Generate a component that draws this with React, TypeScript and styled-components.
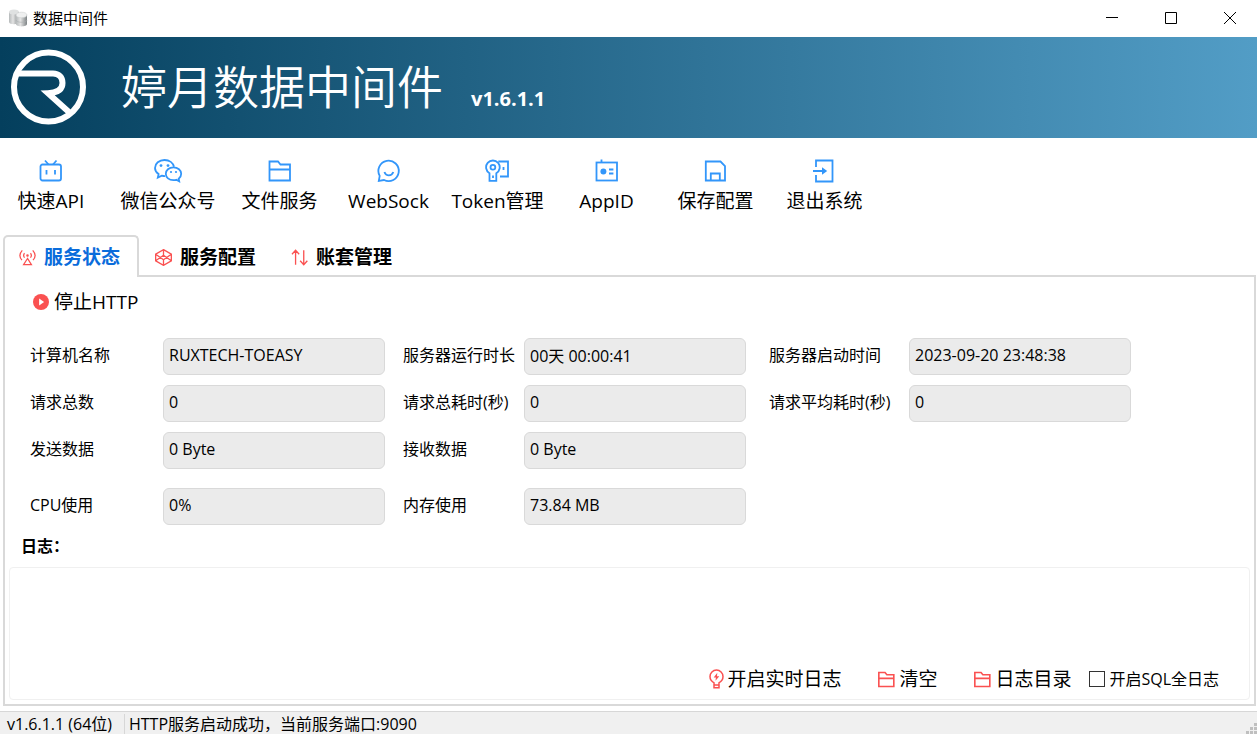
import React from "react";
import styled, { createGlobalStyle, css } from "styled-components";

const GlobalStyle = createGlobalStyle`
  * { box-sizing: border-box; }
  body {
    margin: 0;
    background: #fff;
    color: #000;
    font-family: "Open Sans", "Noto Sans CJK SC", sans-serif;
    font-size: 16px;
    line-height: 24px;
  }
  button, input, textarea { font: inherit; color: inherit; }
`;

const Window = styled.div`
  display: flex;
  flex-direction: column;
  min-height: 100vh;
`;

const TitleBar = styled.header`
  display: flex;
  align-items: center;
  height: 37px;
  padding: 0 0 2px 8px;
  gap: 5px;
`;

const WindowTitle = styled.span`
  flex: 1;
  font-size: 15px;
`;

const WindowControls = styled.div`
  display: flex;
  gap: 5px;
`;

const ControlButton = styled.button`
  display: flex;
  align-items: center;
  justify-content: center;
  width: 54px;
  height: 34px;
  padding: 0;
  border: 0;
  background: none;
`;

const Banner = styled.div`
  display: flex;
  align-items: center;
  height: 101px;
  padding: 0 0 2px 9px;
  color: #fff;
  background: linear-gradient(90deg, #043f5d, #529dc6);
`;

const BannerTitle = styled.h1`
  margin: 0 0 2px 32px;
  font-size: 46px;
  line-height: 60px;
  font-weight: 350;
`;

const BannerVersion = styled.span`
  margin: 24px 0 0 28px;
  font-size: 20px;
  font-weight: 700;
`;

const Toolbar = styled.nav`
  display: flex;
  height: 97px;
  padding-top: 20px;
`;

const ToolButton = styled.button<{ $width: number; $gapAfter?: number }>`
  display: flex;
  flex-direction: column;
  align-items: center;
  gap: 3px;
  width: ${(p) => p.$width}px;
  margin-right: ${(p) => p.$gapAfter ?? 0}px;
  padding: 0;
  border: 0;
  background: none;
  font-size: 19px;
  line-height: 28px;
  white-space: nowrap;
  svg { color: #3296fa; }
`;

const TabList = styled.div`
  position: relative;
  z-index: 1;
  display: flex;
  margin: 0 0 -2px 3px;
`;

const Tab = styled.button<{ $active?: boolean }>`
  display: flex;
  align-items: center;
  gap: 8px;
  width: 136px;
  height: 42px;
  padding: 0 0 0 14px;
  border: 2px solid transparent;
  border-bottom: 0;
  border-radius: 5px 5px 0 0;
  background: none;
  font-size: 19px;
  line-height: 28px;
  font-weight: 700;
  white-space: nowrap;
  svg { color: #fa5151; }
  ${(p) =>
    p.$active &&
    css`
      border-color: #d9d9d9;
      background: #fff;
      color: #0a6cdb;
    `}
`;

const Panel = styled.main`
  flex: 1;
  display: flex;
  flex-direction: column;
  margin: 0 1px 5px 3px;
  border: 2px solid #d9d9d9;
  padding: 11px 4px 4px 4px;
`;

const ActionButton = styled.button`
  display: flex;
  align-items: center;
  padding: 0;
  border: 0;
  background: none;
  font-size: 19px;
  line-height: 28px;
  white-space: nowrap;
  svg { color: #fa5151; }
`;

const StopButton = styled(ActionButton)`
  align-self: flex-start;
  gap: 5px;
  margin-left: 24px;
`;

const StatusGrid = styled.div`
  display: grid;
  grid-template-columns: 373px 366px 1fr;
  row-gap: 10px;
  margin: 22px 0 0 21px;
`;

const Field = styled.div<{ $column: number; $labelWidth: number; $spaced?: boolean }>`
  grid-column: ${(p) => p.$column};
  display: grid;
  grid-template-columns: ${(p) => p.$labelWidth}px 222px;
  margin-top: ${(p) => (p.$spaced ? 9 : 0)}px;
`;

const FieldLabel = styled.label`
  padding-top: 5px;
  white-space: nowrap;
`;

const FieldInput = styled.input`
  width: 222px;
  height: 37px;
  padding: 0 5px 3px;
  border: 1px solid #d9d9d9;
  border-radius: 6px;
  background: #ebebeb;
  outline: none;
`;

const LogLabel = styled.label`
  margin: 9px 0 9px 12px;
  font-weight: 700;
`;

const LogBox = styled.section`
  flex: 1;
  display: flex;
  flex-direction: column;
  border: 1px solid #f0f0f0;
  border-radius: 4px;
  padding: 5px;
`;

const LogText = styled.textarea`
  flex: 1;
  width: 100%;
  min-height: 81px;
  padding: 0;
  border: 0;
  resize: none;
  outline: none;
  background: none;
`;

const LogActions = styled.div`
  display: flex;
  justify-content: flex-end;
  align-items: center;
  height: 40px;
  padding: 10px 25px 0 0;
`;

const LogButton = styled(ActionButton)<{ $gapAfter: number }>`
  gap: 3px;
  margin-right: ${(p) => p.$gapAfter}px;
`;

const CheckLabel = styled.label`
  display: flex;
  align-items: center;
  gap: 4px;
  white-space: nowrap;
`;

const CheckBox = styled.input`
  appearance: none;
  width: 16px;
  height: 16px;
  margin: 0;
  border: 1px solid #333;
  background: #fff;
  &:checked { background: #0a6cdb; }
`;

const StatusBar = styled.footer`
  display: flex;
  height: 23px;
  padding-left: 7px;
  border-top: 1px solid #d7d7d7;
  background: #f0f0f0;
  line-height: 20px;
`;

const StatusCell = styled.span<{ $width?: number }>`
  ${(p) =>
    p.$width
      ? css`
          width: ${p.$width}px;
          border-right: 1px solid #d7d7d7;
        `
      : css`
          flex: 1;
          padding-left: 4px;
        `}
  margin-top: 2px;
  white-space: nowrap;
`;

const Grip = styled.svg`
  align-self: flex-end;
`;

type IconProps = { size?: number; children: React.ReactNode };

const Icon = ({ size = 26, children }: IconProps) => (
  <svg
    width={size}
    height={size}
    viewBox="0 0 26 26"
    fill="none"
    stroke="currentColor"
    strokeWidth={size < 20 ? 2.2 : 1.8}
    aria-hidden="true"
  >
    {children}
  </svg>
);

const TvIcon = () => (
  <Icon>
    <rect x="2.500" y="6.500" width="20.500" height="16" rx="2" />
    <path d="M7 2.500l3.500 4M18.500 2.500l-3.500 4M8.500 12v4.500M17 12v4.500" />
  </Icon>
);

const WechatIcon = () => (
  <svg width="30" height="26" viewBox="0 0 30 26" fill="none" stroke="currentColor" strokeWidth="1.8" aria-hidden="true">
    <path d="M12 18.200c-1.200 0-2.300-.2-3.300-.5L4.800 19.600l.8-3.500C3.200 14.500 2 12.300 2 10 2 5.500 6.200 2 11.500 2c4.800 0 8.700 2.800 9.500 6.800" />
    <path d="M20.400 9.400c-4.400 0-7.600 2.800-7.600 6.400s3.200 6.400 7.600 6.400c1 0 2-.1 2.900-.4l2.900 1.600-.5-2.700c1.600-1.200 2.500-2.900 2.500-4.900 0-3.600-3.300-6.400-7.800-6.400z" />
    <g fill="currentColor" stroke="none">
      <circle cx="8" cy="7.600" r="1.400" />
      <circle cx="15" cy="7.600" r="1.400" />
      <circle cx="18" cy="14" r="1.100" />
      <circle cx="23" cy="14" r="1.100" />
    </g>
  </svg>
);

const FolderIcon = ({ size }: { size?: number }) => (
  <Icon size={size}>
    <path d="M2.500 22.500V3.500H11l2.500 3h9.500v16zM2.500 11.500h20.500" />
  </Icon>
);

const ChatIcon = () => (
  <Icon>
    <path d="M2.800 22.800l.9-4.900A10.200 10.200 0 1 1 8 22z" />
    <path d="M8.400 14c.8 2.200 2.300 3.400 4.400 3.400s3.700-1.200 4.500-3.400" />
  </Icon>
);

const KeyIcon = () => (
  <Icon>
    <path d="M4.500 15.200a6.800 6.800 0 1 1 6.800 0v7.600H4.500z" />
    <circle cx="7.900" cy="9.200" r="2.400" />
    <path d="M13.300 3.500h9.700v15h-8M8 17.500v2.500M18.500 9v3" />
  </Icon>
);

const CardIcon = () => (
  <Icon>
    <rect x="2.500" y="4.500" width="20.500" height="18" />
    <circle cx="9.400" cy="13.500" r="3" fill="currentColor" stroke="none" />
    <path d="M7.500 1.500v3M15 11.500h4.400M15 15.500h4.400" />
  </Icon>
);

const SaveIcon = () => (
  <Icon>
    <path d="M2.800 3.500h14.700l4.500 4.500v14.500H2.800zM7.800 22.500v-7h9v7" />
  </Icon>
);

const ExitIcon = () => (
  <Icon>
    <path d="M4 9V2.500h16.500v21H4V17M1 13h10" />
    <path d="M10 9.200l5.200 3.800-5.200 3.800z" fill="currentColor" stroke="none" />
  </Icon>
);

const SignalIcon = () => (
  <Icon size={17}>
    <g strokeWidth="1.900">
      <path d="M8.500 6.500q-2.800 3.200 0 6.800M17.500 6.500q2.800 3.200 0 6.800M5 2q-7 7.800-.5 15M21 2q7 7.800.5 15M13 14.500l-6 9.500h12z" />
      <circle cx="13" cy="10" r="1" fill="currentColor" />
    </g>
  </Icon>
);

const HexIcon = () => (
  <Icon size={17}>
    <g strokeWidth="2">
      <path d="M13 1l12 7v10l-12 7-12-7V8zM1 8l12 8.500L25 8M1 18l12-8.500L25 18M13 1v8.500M13 16.500V25" />
    </g>
  </Icon>
);

const SortIcon = () => (
  <Icon size={17}>
    <path d="M7 24V2M1.500 8L7 2l5.500 6M19.500 2v22M25 18l-5.500 6-5.500-6" strokeWidth="2" />
  </Icon>
);

const PlayIcon = () => (
  <Icon size={16}>
    <circle cx="13" cy="13" r="13" fill="currentColor" stroke="none" />
    <path d="M10 7.500l8 5.500-8 5.500z" fill="#fff" stroke="none" />
  </Icon>
);

const BulbIcon = () => (
  <svg width="15" height="20" viewBox="0 0 15 20" fill="none" stroke="currentColor" strokeWidth="1.5" aria-hidden="true">
    <path d="M5 13.800C2.400 12.500 1 10.200 1 7.600a6.400 6.400 0 0 1 13 0c0 2.600-1.400 4.900-4 6.200v4.900H5zM5 16h5" />
    <path d="M8.300 3.800L4.700 8.600h2.200l-.4 3.200 3.800-4.600H8z" fill="currentColor" stroke="none" />
  </svg>
);

const DatabaseIcon = () => (
  <svg width="20" height="20" viewBox="0 0 20 20" aria-hidden="true">
    <defs>
      <linearGradient id="drum">
        <stop offset="0" stopColor="#b5b9ba" />
        <stop offset=".4" stopColor="#e4e4e4" />
        <stop offset="1" stopColor="#7d8385" />
      </linearGradient>
    </defs>
    <path d="M1 4v10c0 3 10 3 10 0V4z" fill="url(#drum)" />
    <ellipse cx="6" cy="4" rx="5" ry="2.500" fill="#dfe1e1" />
    <path d="M8 7v9c0 3.200 11 3.200 11 0V7z" fill="url(#drum)" />
    <ellipse cx="13.500" cy="7" rx="5.500" ry="2.800" fill="#eff0f0" stroke="#c5c8c9" strokeWidth=".5" />
    <path d="M8 12c0 3 11 3 11 0" fill="none" stroke="#a9adae" strokeWidth=".6" />
  </svg>
);

const Logo = () => (
  <svg width="80" height="80" viewBox="0 0 80 80" fill="none" stroke="#fff" aria-hidden="true">
    <circle cx="39.500" cy="40" r="34.500" strokeWidth="6" />
    <path d="M8 26.500h36c6 0 9.500 4 9.500 9.500 0 6.500-5 9.800-14.500 10.200L61 66" strokeWidth="6" />
  </svg>
);

const tools = [
  { label: "快速API", icon: <TvIcon />, width: 102, gapAfter: 9 },
  { label: "微信公众号", icon: <WechatIcon />, width: 114 },
  { label: "文件服务", icon: <FolderIcon />, width: 109 },
  { label: "WebSock", icon: <ChatIcon />, width: 109 },
  { label: "Token管理", icon: <KeyIcon />, width: 109 },
  { label: "AppID", icon: <CardIcon />, width: 109 },
  { label: "保存配置", icon: <SaveIcon />, width: 109 },
  { label: "退出系统", icon: <ExitIcon />, width: 109 },
];

const IconSlot = styled.span`
  display: flex;
  align-items: center;
  justify-content: center;
  height: 26px;
`;

const labelWidths = [133, 121, 140];

const fields = [
  { id: "host", column: 1, label: "计算机名称", value: "RUXTECH-TOEASY" },
  { id: "uptime", column: 2, label: "服务器运行时长", value: "00天 00:00:41" },
  { id: "started", column: 3, label: "服务器启动时间", value: "2023-09-20 23:48:38" },
  { id: "requests", column: 1, label: "请求总数", value: "0" },
  { id: "total-time", column: 2, label: "请求总耗时(秒)", value: "0" },
  { id: "average-time", column: 3, label: "请求平均耗时(秒)", value: "0" },
  { id: "sent", column: 1, label: "发送数据", value: "0 Byte" },
  { id: "received", column: 2, label: "接收数据", value: "0 Byte" },
  { id: "cpu", column: 1, label: "CPU使用", value: "0%", spaced: true },
  { id: "memory", column: 2, label: "内存使用", value: "73.84 MB", spaced: true },
];

export default function App() {
  return (
    <Window>
      <GlobalStyle />
      <TitleBar>
        <DatabaseIcon />
        <WindowTitle>数据中间件</WindowTitle>
        <WindowControls>
          <ControlButton aria-label="最小化">
            <svg width="12" height="12" viewBox="0 0 12 12" stroke="#000"><path d="M0 5.500h12" /></svg>
          </ControlButton>
          <ControlButton aria-label="最大化">
            <svg width="12" height="12" viewBox="0 0 12 12" stroke="#000" fill="none"><path d="M.5.500h11v11H.5z" /></svg>
          </ControlButton>
          <ControlButton aria-label="关闭">
            <svg width="12" height="12" viewBox="0 0 12 12" stroke="#000"><path d="M0 0l12 12M12 0L0 12" /></svg>
          </ControlButton>
        </WindowControls>
      </TitleBar>

      <Banner>
        <Logo />
        <BannerTitle>婷月数据中间件</BannerTitle>
        <BannerVersion>v1.6.1.1</BannerVersion>
      </Banner>

      <Toolbar>
        {tools.map((t) => (
          <ToolButton key={t.label} $width={t.width} $gapAfter={t.gapAfter}>
            <IconSlot>{t.icon}</IconSlot>
            {t.label}
          </ToolButton>
        ))}
      </Toolbar>

      <TabList role="tablist">
        <Tab role="tab" aria-selected="true" $active><SignalIcon />服务状态</Tab>
        <Tab role="tab" aria-selected="false"><HexIcon />服务配置</Tab>
        <Tab role="tab" aria-selected="false"><SortIcon />账套管理</Tab>
      </TabList>

      <Panel>
        <StopButton><PlayIcon />停止HTTP</StopButton>
        <StatusGrid>
          {fields.map((f) => (
            <Field key={f.id} $column={f.column} $labelWidth={labelWidths[f.column - 1]} $spaced={f.spaced}>
              <FieldLabel htmlFor={f.id}>{f.label}</FieldLabel>
              <FieldInput id={f.id} value={f.value} readOnly />
            </Field>
          ))}
        </StatusGrid>
        <LogLabel htmlFor="log">日志：</LogLabel>
        <LogBox>
          <LogText id="log" readOnly />
          <LogActions>
            <LogButton $gapAfter={36}><BulbIcon />开启实时日志</LogButton>
            <LogButton $gapAfter={36}><FolderIcon size={19} />清空</LogButton>
            <LogButton $gapAfter={18}><FolderIcon size={19} />日志目录</LogButton>
            <CheckLabel>
              <CheckBox type="checkbox" />
              开启SQL全日志
            </CheckLabel>
          </LogActions>
        </LogBox>
      </Panel>

      <StatusBar>
        <StatusCell $width={118}>v1.6.1.1 (64位)</StatusCell>
        <StatusCell>HTTP服务启动成功，当前服务端口:9090</StatusCell>
        <Grip width="12" height="12" viewBox="0 0 12 12" fill="#bfbfbf" aria-hidden="true">
          <path d="M9 1h3v3H9zM5 5h3v3H5zM9 5h3v3H9zM1 9h3v3H1zM5 9h3v3H5zM9 9h3v3H9z" />
        </Grip>
      </StatusBar>
    </Window>
  );
}
